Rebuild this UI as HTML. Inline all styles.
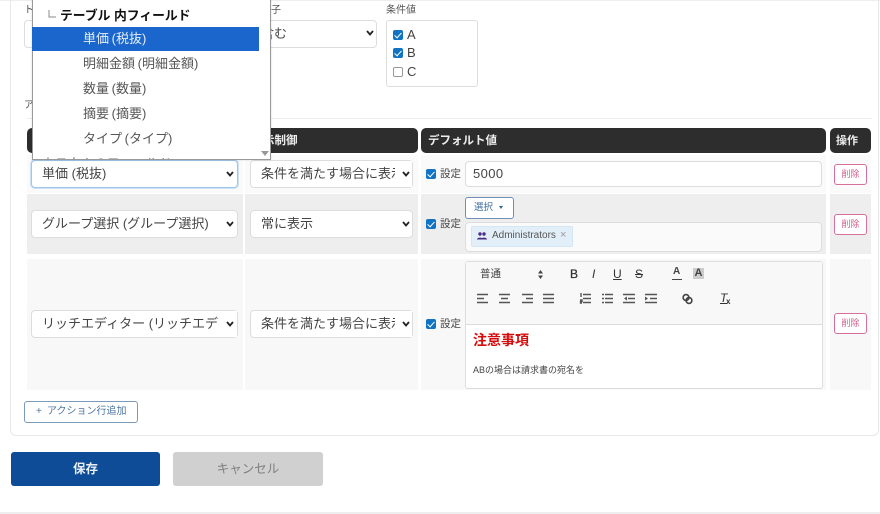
<!DOCTYPE html>
<html lang="ja"><head><meta charset="utf-8"><style>
html,body{margin:0;padding:0;background:#fff}
#p{position:relative;width:880px;height:514px;overflow:hidden;background:#fff;font-family:"Liberation Sans","Noto Sans CJK JP",sans-serif;color:#444;font-size:13px;filter:blur(.3px)}
#p div,#p svg{position:absolute;box-sizing:border-box}
.t{white-space:nowrap;line-height:1}
.sel{background:#fff;border:1px solid #ddd;border-radius:4px;height:28px;font-size:13px;line-height:26px;padding-left:10px;color:#444;white-space:nowrap;overflow:hidden}
.hd{background:#2d2d2d;border-radius:5px;top:128px;height:25px;color:#eee;font-weight:bold;font-size:11px;line-height:27px;padding-left:6px;white-space:nowrap}
.del{left:834px;width:33px;height:21px;border:1px solid #d6709a;border-radius:3px;background:#fff;color:#d0608c;font-size:9px;line-height:19px;text-align:center}
.cb{width:10px;height:10px;background:#1173c4;border-radius:2px}
.cb:after{content:"";position:absolute;left:3px;top:1px;width:3px;height:6px;border:solid #fff;border-width:0 1.5px 1.5px 0;transform:rotate(42deg)}
.opt{left:83px;font-size:13px;color:#555;white-space:nowrap;line-height:1;word-spacing:-1px}
.chev{width:8px;height:6px}
.lb{font-size:10px;color:#555}
</style></head><body><div id="p">
<div style="left:0;top:0;width:880px;height:1px;background:#eee"></div>
<div style="left:0;top:512px;width:880px;height:2px;background:#eee"></div>
<div style="left:10px;top:-10px;width:869px;height:446px;border:1px solid #e8e8e8;border-radius:6px"></div>

<div class="t lb" style="left:24px;top:6px">ト</div>
<div style="left:24px;top:20px;width:20px;height:28px;background:#fff;border:1px solid #ddd;border-radius:4px"></div>
<div class="t lb" style="left:271px;top:6px">子</div>
<div class="sel" style="left:240px;top:20px;width:137px;padding-left:20px">含む</div>
<svg class="chev" style="left:366px;top:30px" viewBox="0 0 8 6"><path d="M1 1l3 3.500L7 1" fill="none" stroke="#222" stroke-width="1.800"/></svg>
<div class="t lb" style="left:386px;top:6px">条件値</div>
<div style="left:386px;top:20px;width:92px;height:67px;background:#fff;border:1px solid #ddd;border-radius:3px"></div>
<div class="cb" style="left:393px;top:30px"></div><div class="t" style="left:407px;top:28px;font-size:13px">A</div>
<div class="cb" style="left:393px;top:48px"></div><div class="t" style="left:407px;top:46px;font-size:13px">B</div>
<div style="left:393px;top:67px;width:10px;height:10px;background:#fff;border:1px solid #999;border-radius:2px"></div><div class="t" style="left:407px;top:65px;font-size:13px">C</div>
<div class="t lb" style="left:24px;top:101px">ア</div>
<div style="left:27px;top:118px;width:845px;height:1px;background:#eee"></div>

<div class="hd" style="left:27px;width:216px"></div>
<div class="hd" style="left:245px;width:173px;padding-left:18px;font-size:11.500px">示制御</div>
<div class="hd" style="left:421px;width:405px;font-size:11.500px;padding-left:7px">デフォルト値</div>
<div class="hd" style="left:830px;width:41px">操作</div>

<div style="left:27px;top:155px;width:216px;height:38px;background:#fafafa"></div>
<div style="left:245px;top:155px;width:173px;height:38px;background:#fafafa"></div>
<div style="left:421px;top:155px;width:405px;height:38px;background:#fafafa"></div>
<div style="left:830px;top:155px;width:41px;height:38px;background:#fafafa"></div>

<div style="left:27px;top:194px;width:216px;height:60px;background:#eee"></div>
<div style="left:245px;top:194px;width:173px;height:60px;background:#eee"></div>
<div style="left:421px;top:194px;width:405px;height:60px;background:#eee"></div>
<div style="left:830px;top:194px;width:41px;height:60px;background:#eee"></div>

<div style="left:27px;top:259px;width:216px;height:131px;background:#f8f8f8"></div>
<div style="left:245px;top:259px;width:173px;height:131px;background:#f8f8f8"></div>
<div style="left:421px;top:259px;width:405px;height:131px;background:#f8f8f8"></div>
<div style="left:830px;top:259px;width:41px;height:131px;background:#f8f8f8"></div>

<div class="sel" style="left:31px;top:160px;width:207px;border-color:#9fc5ea;box-shadow:0 0 0 1px #cfe2f5">単価 (税抜)</div>
<div class="sel" style="left:250px;top:160px;width:163px">条件を満たす場合に表示</div>
<div class="sel" style="left:31px;top:210px;width:207px">グループ選択 (グループ選択)</div>
<div class="sel" style="left:250px;top:210px;width:163px">常に表示</div>
<div class="sel" style="left:31px;top:310px;width:207px">リッチエディター (リッチエディ</div>
<div class="sel" style="left:250px;top:310px;width:163px">条件を満たす場合に表示</div>
<div style="left:395px;top:161px;width:17px;height:26px;background:#fff"></div>
<div style="left:219px;top:311px;width:18px;height:26px;background:#fff"></div>
<div style="left:395px;top:311px;width:17px;height:26px;background:#fff"></div>
<svg class="chev" style="left:226px;top:171px" viewBox="0 0 8 6"><path d="M1 1l3 3.500L7 1" fill="none" stroke="#222" stroke-width="1.800"/></svg>
<svg class="chev" style="left:402px;top:171px" viewBox="0 0 8 6"><path d="M1 1l3 3.500L7 1" fill="none" stroke="#222" stroke-width="1.800"/></svg>
<svg class="chev" style="left:226px;top:221px" viewBox="0 0 8 6"><path d="M1 1l3 3.500L7 1" fill="none" stroke="#222" stroke-width="1.800"/></svg>
<svg class="chev" style="left:402px;top:221px" viewBox="0 0 8 6"><path d="M1 1l3 3.500L7 1" fill="none" stroke="#222" stroke-width="1.800"/></svg>
<svg class="chev" style="left:226px;top:321px" viewBox="0 0 8 6"><path d="M1 1l3 3.500L7 1" fill="none" stroke="#222" stroke-width="1.800"/></svg>
<svg class="chev" style="left:402px;top:321px" viewBox="0 0 8 6"><path d="M1 1l3 3.500L7 1" fill="none" stroke="#222" stroke-width="1.800"/></svg>

<div class="cb" style="left:426px;top:169px"></div><div class="t" style="left:440px;top:169px;font-size:10.500px">設定</div>
<div style="left:465px;top:161px;width:357px;height:26px;background:#fff;border:1px solid #ddd;border-radius:4px;font-size:13px;line-height:24px;padding-left:7px;letter-spacing:.4px">5000</div>
<div class="del" style="top:164px">削除</div>

<div class="cb" style="left:426px;top:219px"></div><div class="t" style="left:440px;top:219px;font-size:10.500px">設定</div>
<div style="left:465px;top:197px;width:49px;height:22px;background:#fff;border:1px solid #6f8fb5;border-radius:3px;font-size:9.500px;line-height:20px;padding-left:8px;color:#3f6c9f">選択</div>
<div style="left:499px;top:206px;width:0;height:0;border-left:2px solid transparent;border-right:2px solid transparent;border-top:3px solid #35659c"></div>
<div style="left:465px;top:222px;width:357px;height:30px;background:#fafafa;border:1px solid #ddd;border-radius:4px"></div>
<div style="left:471px;top:226px;width:102px;height:21px;background:#e3eff8;border:1px solid #d5e6f3;border-radius:2px"></div>
<svg style="left:477px;top:232px;width:10px;height:8px" viewBox="0 0 10 8"><circle cx="3" cy="2" r="1.700" fill="#4b2d86"/><circle cx="7" cy="2" r="1.700" fill="#4b2d86"/><path d="M0 7.500C0 5 6 5 6 7.500zM4 7.500C4 5 10 5 10 7.500z" fill="#4b2d86"/></svg>
<div class="t" style="left:492px;top:231px;font-size:10px;color:#555">Administrators</div>
<div class="t" style="left:560px;top:230px;font-size:11px;color:#999">×</div>
<div class="del" style="top:214px">削除</div>

<div class="cb" style="left:426px;top:319px"></div><div class="t" style="left:440px;top:319px;font-size:10.500px">設定</div>
<div style="left:465px;top:261px;width:358px;height:128px;background:#fff;border:1px solid #ddd;border-radius:3px"></div>
<div style="left:466px;top:262px;width:356px;height:63px;background:#f8f8f8;border-bottom:1px solid #ddd"></div>
<div class="t" style="left:480px;top:269px;font-size:10.500px;color:#444">普通</div>
<svg style="left:538px;top:270px;width:5px;height:9px" viewBox="0 0 5 9"><path d="M2.500 0l2.500 3.500H0zM2.500 9L5 5.500H0z" fill="#444"/></svg>
<div class="t" style="left:570px;top:268px;font-size:12px;color:#333;-webkit-text-stroke:.3px #333">B</div>
<div class="t" style="left:592px;top:268px;font-size:12px;font-style:italic;color:#333">I</div>
<div class="t" style="left:613px;top:268px;font-size:12px;text-decoration:underline;color:#333">U</div>
<div class="t" style="left:635px;top:268px;font-size:12px;text-decoration:line-through;color:#333">S</div>
<div class="t" style="left:672px;top:267px;width:10px;font-size:10px;font-weight:bold;color:#444;border-bottom:1px solid #444;padding:0 0 2px 1px">A</div>
<div class="t" style="left:693px;top:268px;width:11px;height:11px;background:#ccc;font-size:11px;font-weight:bold;text-align:center;color:#444;line-height:11px">A</div>
<svg style="left:476px;top:293px;width:80px;height:11px" viewBox="0 0 80 11" fill="none" stroke="#555" stroke-width="1.400"><path d="M1 1.500h11M1 5.500h7M1 9.500h11M23 1.500h11M25 5.500h7M23 9.500h11M46 1.500h11M50 5.500h7M46 9.500h11M67 1.500h11M67 5.500h11M67 9.500h11"/></svg>
<svg style="left:578px;top:293px;width:80px;height:11px" viewBox="0 0 80 11" fill="none" stroke="#555" stroke-width="1.400"><path d="M5 1.500h8M5 5.500h8M5 9.500h8M3 0v4M2 7h2v1.500H2.500V10H4M27 1.500h8M27 5.500h8M27 9.500h8M24 1.500h2M24 5.500h2M24 9.500h2M45 1.500h12M50 5.500h7M45 9.500h12M67 1.500h12M72 5.500h7M67 9.500h12"/><path d="M49 3.500v4l-3-2zM67 3.500v4l3-2z" fill="#555" stroke="none"/></svg>
<svg style="left:682px;top:293px;width:11px;height:12px" viewBox="0 0 11 12" fill="none" stroke="#444" stroke-width="1.600"><circle cx="4" cy="4.500" r="2.900"/><circle cx="7" cy="7.500" r="2.900"/></svg>
<div class="t" style="left:720px;top:292px;font-size:12px;font-style:italic;color:#333;text-decoration:underline;">T</div>
<div class="t" style="left:726px;top:298px;font-size:8px;font-weight:bold;color:#333">x</div>
<div class="t" style="left:473px;top:333px;font-size:14px;font-weight:bold;color:#d40c0c">注意事項</div>
<div class="t" style="left:473px;top:366px;font-size:9px;color:#444">ABの場合は請求書の宛名を</div>
<div class="del" style="top:313px">削除</div>

<div style="left:24px;top:401px;width:114px;height:22px;background:#fff;border:1px solid #7a9abb;border-radius:3px"></div>
<div class="t" style="left:36px;top:407px;font-size:10px;color:#4e76a2">+</div>
<div class="t" style="left:47px;top:407px;font-size:10px;color:#4e76a2">アクション行追加</div>
<div style="left:11px;top:452px;width:149px;height:34px;background:#0f4c97;border-radius:3px;color:#e8eef6;font-size:12.500px;font-weight:bold;line-height:34px;text-align:center">保存</div>
<div style="left:173px;top:452px;width:150px;height:34px;background:#d0d0d0;border-radius:3px;color:#808080;font-size:12.500px;line-height:34px;text-align:center">キャンセル</div>

<div style="left:32px;top:-2px;width:239px;height:162px;background:#fff;border:1px solid #999;box-shadow:0 0 2px rgba(0,0,0,.15);overflow:hidden">
<div class="t" style="left:9px;top:158px;font-size:13px;color:#777">カスタムのフィールド</div></div>
<svg style="left:48px;top:10px;width:8px;height:8px" viewBox="0 0 8 8"><path d="M1 0v7h7" fill="none" stroke="#888"/></svg>
<div class="t" style="left:60px;top:10px;font-size:12.800px;font-weight:bold;color:#111">テーブル 内フィールド</div>
<div style="left:32px;top:27px;width:227px;height:24px;background:#1a66cc"></div>
<div class="opt" style="top:32px;color:#e6eefa">単価 (税抜)</div>
<div class="opt" style="top:57px">明細金額 (明細金額)</div>
<div class="opt" style="top:82px">数量 (数量)</div>
<div class="opt" style="top:107px">摘要 (摘要)</div>
<div class="opt" style="top:132px">タイプ (タイプ)</div>
<div style="left:261px;top:151px;width:0;height:0;border-left:4px solid transparent;border-right:4px solid transparent;border-top:5px solid #999"></div>
</div></body></html>
